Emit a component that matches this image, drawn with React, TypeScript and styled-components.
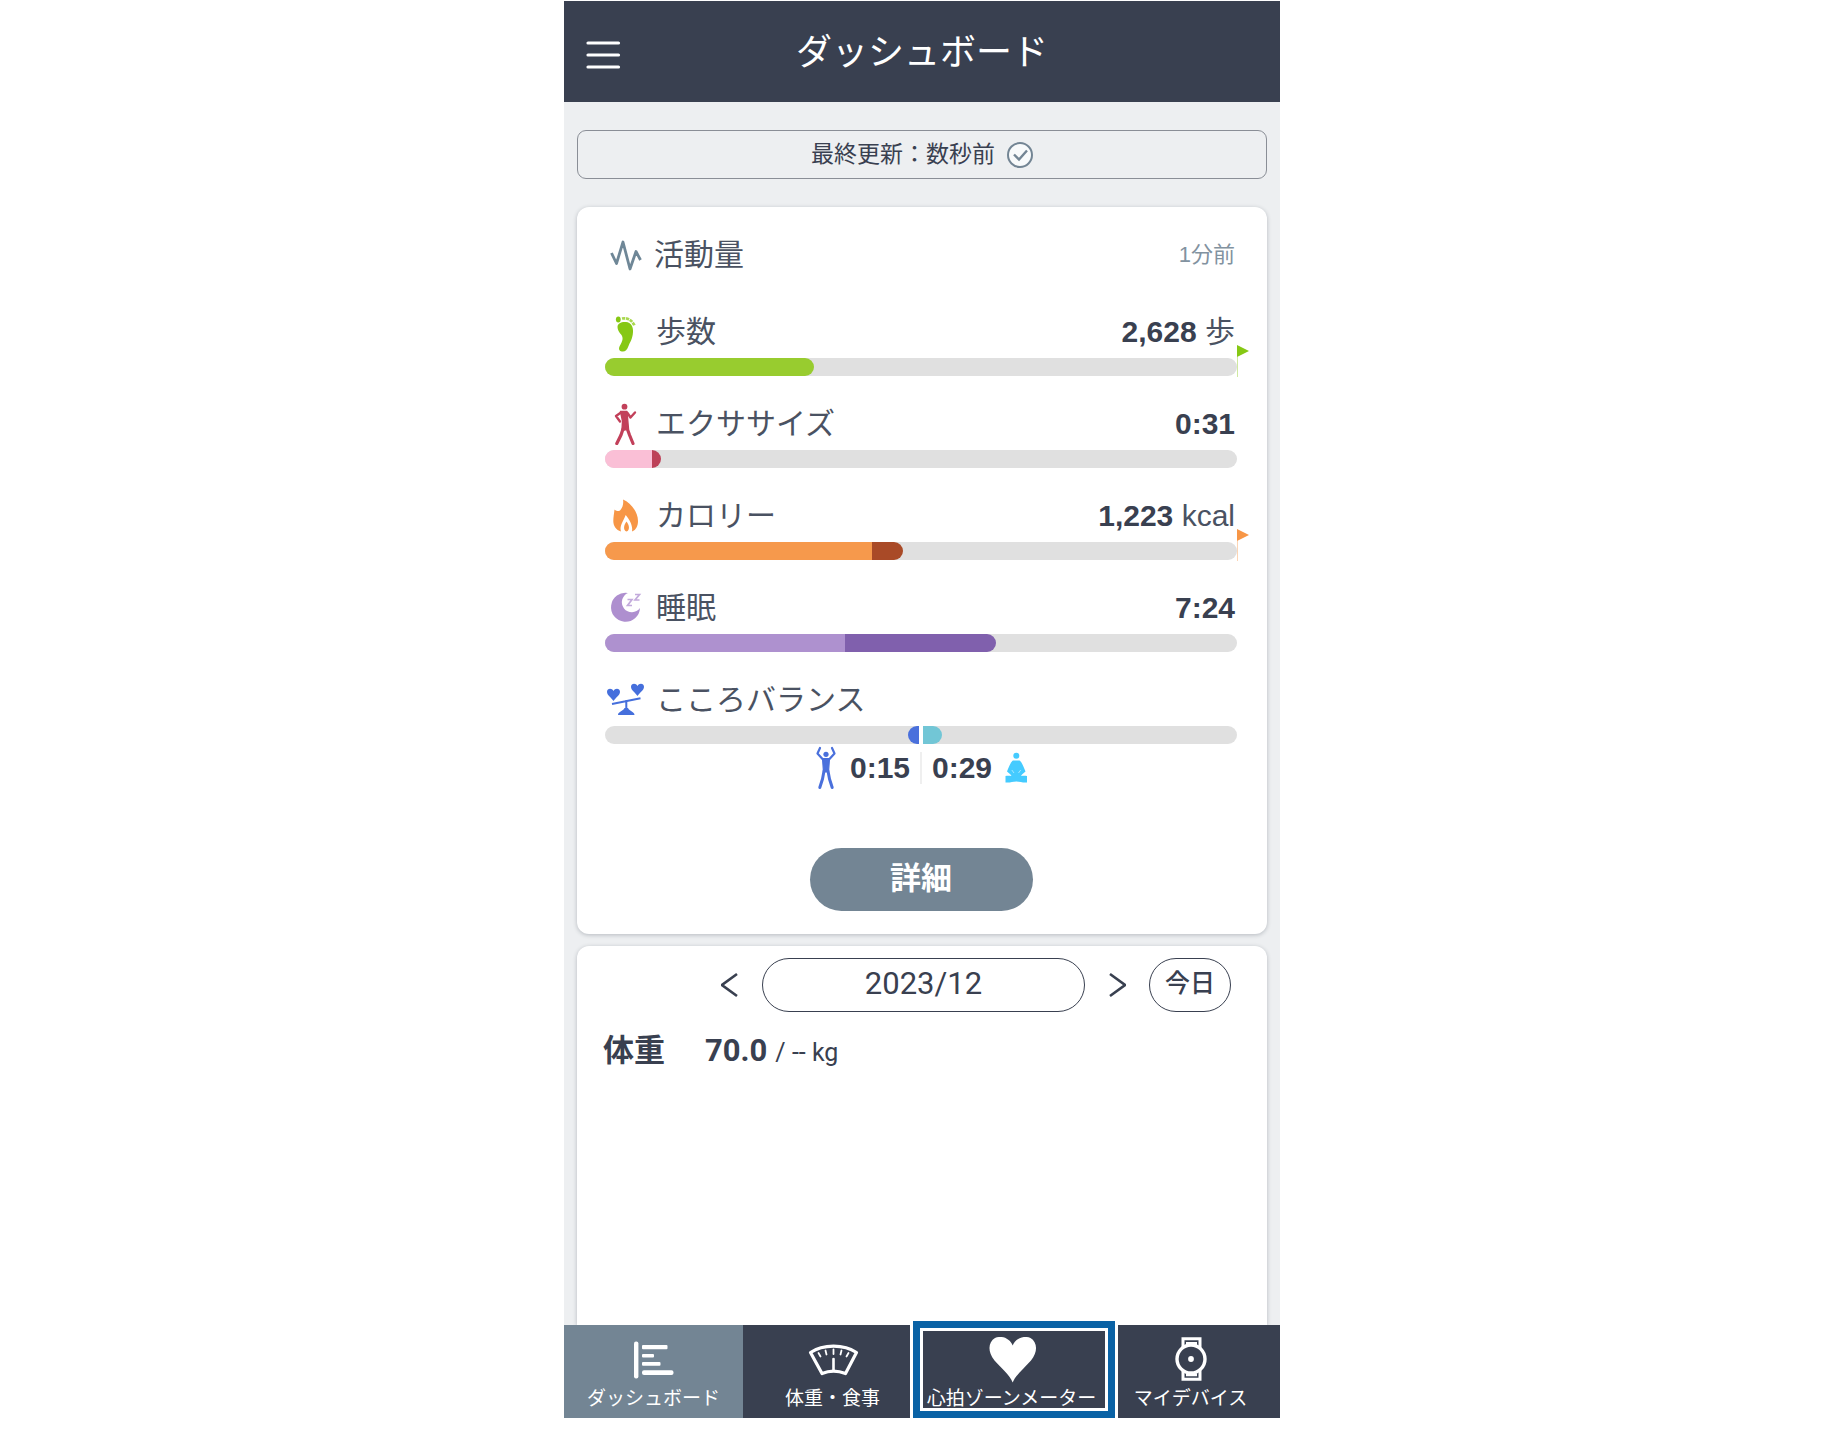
import React from "react";
import styled, { createGlobalStyle } from "styled-components";

const ink = "#394050";
const slate = "#738594";
const sans = `"Liberation Sans", "Noto Sans CJK JP", sans-serif`;
const roboto = `Roboto, "Noto Sans CJK JP", sans-serif`;

const GlobalStyle = createGlobalStyle`
  *, *::before, *::after { box-sizing: border-box; }
  body { margin: 0; background: #fff; font-family: ${roboto}; color: ${ink}; }
  button { font: inherit; color: inherit; background: none; border: 0; padding: 0; cursor: pointer; }
  h1, h2, h3, p { margin: 0; font-weight: 400; }
  svg { display: block; flex: none; }
`;

const Page = styled.div`
  display: flex;
  justify-content: center;
  min-height: 100vh;
  padding: 1px 0 27px 10px;
`;

const Phone = styled.div`
  display: flex;
  flex-direction: column;
  width: 100%;
  max-width: 716px;
  background: #edeff1;
`;

const Header = styled.header`
  display: grid;
  grid-template-columns: 1fr auto 1fr;
  align-items: center;
  height: 101px;
  padding: 2px 20px 0;
  background: ${ink};
  color: #fff;
`;

const MenuButton = styled.button`
  justify-self: start;
  padding-top: 4px;
`;

const Title = styled.h1`
  font-size: 36px;
  line-height: 52px;
`;

const Main = styled.main`
  flex: 1;
  display: flex;
  flex-direction: column;
  padding: 28px 13px 0;
`;

const UpdateButton = styled.button`
  display: flex;
  align-items: center;
  justify-content: center;
  gap: 12px;
  height: 49px;
  margin-bottom: 28px;
  border: 1px solid #8a8e96;
  border-radius: 9px;
  font-size: 23px;
  line-height: 34px;
`;

const Card = styled.section`
  background: #fff;
  border-radius: 12px;
  box-shadow: 0 1px 4px rgba(40, 50, 65, 0.28);
`;

const ActivityCard = styled(Card)`
  display: flex;
  flex-direction: column;
  padding: 28px 30px 23px 28px;
  margin-bottom: 12px;
  font-family: ${sans};
`;

const WeightCard = styled(Card)`
  flex: 1;
  padding: 12px 36px 0 26px;
  border-radius: 12px 12px 0 0;
`;

const Line = styled.div`
  display: flex;
  align-items: center;
  gap: 11px;
  height: 40px;
  padding-right: 2px;
  font-size: 30px;
  line-height: 40px;
  color: #4a5262;
`;

const Heading = styled(Line)`
  gap: 9px;
  margin-bottom: 37px;
`;

const HeadingText = styled.h2`
  flex: 1;
  font-size: 30px;
`;

const Ago = styled.span`
  font-size: 22px;
  color: #8292a0;
`;

const Metrics = styled.div`
  display: grid;
  gap: 28px;
`;

const Metric = styled.div`
  display: grid;
  gap: 6px;
`;

const MetricName = styled.h3`
  flex: 1;
  font-size: 30px;
`;

const MetricValue = styled.b`
  color: ${ink};
`;

const Bar = styled.div`
  position: relative;
  height: 18px;
  border-radius: 9px;
  background: #e0e0e0;
`;

const Fill = styled.div`
  display: flex;
  height: 100%;
`;

const Segment = styled.div<{ $color: string; $first: boolean; $last: boolean }>`
  background: ${(p) => p.$color};
  border-radius: ${(p) => `${p.$first ? 9 : 0}px ${p.$last ? 9 : 0}px ${p.$last ? 9 : 0}px ${p.$first ? 9 : 0}px`};
`;

const Goal = styled.svg`
  position: absolute;
  left: 100%;
  bottom: -1px;
`;

const BalanceBar = styled(Bar)`
  display: grid;
  grid-template-columns: 1fr 1fr;
  column-gap: 4px;
  background: linear-gradient(to right, #e0e0e0 calc(50% - 2px), #fff calc(50% - 2px), #fff calc(50% + 2px), #e0e0e0 calc(50% + 2px));
`;

const BalanceFill = styled.div<{ $side: "left" | "right" }>`
  justify-self: ${(p) => (p.$side === "left" ? "end" : "start")};
  background: ${(p) => (p.$side === "left" ? "#4a70dc" : "#72c6d6")};
  border-radius: ${(p) => (p.$side === "left" ? "9px 0 0 9px" : "0 9px 9px 0")};
`;

const BalanceValues = styled.div`
  display: flex;
  align-items: center;
  justify-content: center;
  gap: 12px;
  height: 44px;
  margin: 2px 0 58px;
  font-size: 30px;
  font-weight: 700;
`;

const Divided = styled.div`
  display: flex;
  align-items: center;
  gap: 10px;
`;

const Divider = styled.span`
  width: 2px;
  height: 32px;
  background: #efefef;
`;

const DetailButton = styled.button`
  align-self: center;
  width: 223px;
  height: 63px;
  padding-bottom: 2px;
  border-radius: 32px;
  background: ${slate};
  color: #fff;
  font-size: 31px;
  font-weight: 700;
  line-height: 40px;
`;

const MonthRow = styled.div`
  display: flex;
  align-items: center;
  justify-content: flex-end;
  gap: 23px;
`;

const Outlined = styled.button<{ $width: number; $size: number; $weight: number }>`
  width: ${(p) => p.$width}px;
  height: 54px;
  border: 1px solid ${ink};
  border-radius: 27px;
  font-size: ${(p) => p.$size}px;
  font-weight: ${(p) => p.$weight};
  line-height: 36px;
  padding-bottom: 2px;
`;

const WeightRow = styled.p`
  display: flex;
  align-items: baseline;
  margin-top: 19px;
  font-size: 25px;
  line-height: 40px;
`;

const WeightName = styled.strong`
  width: 102px;
  font-size: 31px;
`;

const WeightValue = styled.strong`
  margin-right: 8px;
  font-size: 31px;
`;

const Nav = styled.nav`
  display: grid;
  grid-template-columns: repeat(4, 1fr);
  height: 93px;
  background: ${ink};
`;

const Tab = styled.a<{ $active?: boolean }>`
  position: relative;
  display: flex;
  flex-direction: column;
  align-items: center;
  gap: 3px;
  padding-top: 12px;
  background: ${(p) => (p.$active ? slate : "transparent")};
  color: #fff;
  font-size: 19px;
  line-height: 26px;
  white-space: nowrap;
  text-decoration: none;
`;

const Highlight = styled.span`
  position: absolute;
  z-index: 1;
  inset: -4px -14px 0 -9px;
  border: 7px solid #0a62a5;
  box-shadow: inset 0 0 0 3px #fff, -3px 0 0 #fff, 3px 0 0 #fff;
`;

const FootIcon = () => (
  <svg width="40" height="42" viewBox="0 0 40 42" fill="#86c814">
    <path d="M12.500 16C12.500 12 17 10.500 21 11C26 11.500 28.500 16 28 21C27.600 28 25 31 23.500 35C22 39 20 41 17 40.500C13.500 40 13.500 37 15 34.500C17.500 30 18.500 27.500 16.500 24C14 21 12.500 19 12.500 16Z" />
    <ellipse cx="13.300" cy="8.500" rx="2.400" ry="3" />
    <path d="M17 7.500C22 6.500 27 9 29.500 14.500" fill="none" stroke="#a9d850" strokeWidth="2.800" strokeDasharray="3.200 .8" />
  </svg>
);

const WalkIcon = () => (
  <svg width="40" height="42" viewBox="0 0 40 42" fill="none" stroke="#c2405a" strokeWidth="2.400" strokeLinecap="round" strokeLinejoin="round">
    <circle cx="19.500" cy="3.700" r="2.900" fill="#c2405a" stroke="none" />
    <path d="M16 9.500L11 13L15 18.500M22.500 10L25.500 14.500L30 9.500" />
    <path d="M15.500 8.500H22L23.500 26L17 27.500L17.500 18Z" fill="#c2405a" strokeWidth="1.400" />
    <path d="M18 26L16 32L11.800 40.500M22 25L24.500 32L28 40.500" strokeWidth="3.200" />
  </svg>
);

const FlameIcon = () => (
  <svg width="40" height="42" viewBox="0 0 40 42" fill="#f79646">
    <path d="M18 4.500C26 8 33 17 33 26C33 31 31 35 27 36.500C28 31 25 25 20.700 20C19 25 14 31 16 36.500C11 35 8.300 31 8.300 26C8.300 22 9 19 9.500 14.500C11 16 13 16.500 15 15.500C17.500 13 18.800 9 18 4.500Z" />
    <path d="M21.500 26.500C24.500 30 25 35.500 21.500 36.500C18 35.500 18.500 30 21.500 26.500Z" />
  </svg>
);

const MoonIcon = () => (
  <svg width="40" height="42" viewBox="0 0 40 42">
    <path d="M23 6A14.500 14.500 0 1 0 35 21A10 10 0 1 1 23 6Z" fill="#ae8fcf" />
    <path d="M22.500 12.500H27L22.500 18.500H27M30 7.500H34.500L30 13H34.500" fill="none" stroke="#c3abdc" strokeWidth="1.700" />
  </svg>
);

const BalanceIcon = () => (
  <svg width="40" height="42" viewBox="0 0 40 42" fill="#456fdc">
    <path d="M8.500 22C6 18 2 16.500 2 12.700C2 9 7 8.500 8.500 12C10 8.500 15 9 15 12.700C15 16.500 11 18 8.500 22Z" />
    <path d="M32.500 17C30 13 26 11.500 26 7.700C26 4 31 3.500 32.500 7C34 3.500 39 4 39 7.700C39 11.500 35 13 32.500 17Z" />
    <path d="M7 25L35.500 19.300M21.300 21V32" stroke="#456fdc" strokeWidth="2" />
    <path d="M13 36C13 32.500 18 32.500 19.500 29H23C24.500 32.500 29.500 32.500 29.500 36Z" />
  </svg>
);

const StretchIcon = () => (
  <svg width="24" height="44" viewBox="0 0 24 44" fill="none" stroke="#4a70dc" strokeWidth="2.200" strokeLinecap="round" strokeLinejoin="round">
    <circle cx="12" cy="8.300" r="2.600" fill="#4a70dc" stroke="none" />
    <path d="M6 2L3.500 7.500L8.500 13M18 2L20.500 7.500L15.500 13" />
    <path d="M8.500 12.500H15.500L14.500 26H9.500Z" fill="#4a70dc" strokeWidth="1.200" />
    <path d="M10 25L8.500 33L5.800 41.500M14 25L15.500 33L18.200 41.500" strokeWidth="3" />
  </svg>
);

const LotusIcon = () => (
  <svg width="24" height="44" viewBox="0 0 24 44" fill="#45cbff">
    <circle cx="12.300" cy="9.700" r="3" />
    <path d="M9 14.500H15.500C18 16 19.500 21 21.500 25.500L18 28.500L17 30C19.500 29.500 21 29.500 23 30V36.500C19 37 16 35.500 12.300 35.500C8.500 35.500 6 37 1.500 36.500V30C3.500 29.500 5 29.500 7.500 30L6.500 28.500L3 25.500C5 21 6.500 16 9 14.500Z" />
    <path d="M7.800 24L10 27M16.700 24L14.500 27" stroke="#a5e6ff" strokeWidth="1" />
  </svg>
);

const Chevron = ({ d }: { d: string }) => (
  <svg width="18" height="28" viewBox="0 0 18 28" fill="none" stroke={ink} strokeWidth="2.600">
    <path d={d} />
  </svg>
);

type MetricData = {
  name: string;
  icon: React.ReactNode;
  value: string;
  unit?: string;
  goal?: string;
  parts: { share: number; color: string }[];
};

const metrics: MetricData[] = [
  { name: "歩数", icon: <FootIcon />, value: "2,628", unit: "歩", goal: "#86c814", parts: [{ share: 33, color: "#98cc2f" }] },
  { name: "エクササイズ", icon: <WalkIcon />, value: "0:31", parts: [{ share: 7.4, color: "#fabfd6" }, { share: 1.4, color: "#bd4058" }] },
  { name: "カロリー", icon: <FlameIcon />, value: "1,223", unit: "kcal", goal: "#f79646", parts: [{ share: 42.2, color: "#f6994c" }, { share: 4.9, color: "#a94a27" }] },
  { name: "睡眠", icon: <MoonIcon />, value: "7:24", parts: [{ share: 38, color: "#ae91cf" }, { share: 23.8, color: "#8060ad" }] },
];

export default function App() {
  return (
    <>
      <GlobalStyle />
      <Page>
        <Phone>
          <Header>
            <MenuButton aria-label="メニュー">
              <svg width="38" height="32" viewBox="0 0 38 32" stroke="#fff" strokeWidth="3.200" strokeLinecap="round">
                <path d="M4 4H34.500M4 16H34.500M4 28H34.500" />
              </svg>
            </MenuButton>
            <Title>ダッシュボード</Title>
          </Header>
          <Main>
            <UpdateButton>
              最終更新：数秒前
              <svg width="26" height="28" viewBox="0 0 26 28" fill="none" stroke={slate} strokeWidth="2">
                <circle cx="13" cy="14" r="12" fill="#f8fafb" />
                <path d="M7 13.500L12 18.500L20 9.500" strokeWidth="2.400" />
              </svg>
            </UpdateButton>

            <ActivityCard>
              <Heading>
                <svg width="40" height="42" viewBox="0 0 40 42" fill="none" stroke="#6f8797" strokeWidth="2.800" strokeLinejoin="round">
                  <path d="M6.500 19L11.500 29.500L18 8L25 35L31 17.500L35.500 26" />
                </svg>
                <HeadingText>活動量</HeadingText>
                <Ago>1分前</Ago>
              </Heading>
              <Metrics>
                {metrics.map((m) => (
                  <Metric key={m.name}>
                    <Line>
                      {m.icon}
                      <MetricName>{m.name}</MetricName>
                      <span>
                        <MetricValue>{m.value}</MetricValue>
                        {m.unit && ` ${m.unit}`}
                      </span>
                    </Line>
                    <Bar>
                      <Fill>
                        {m.parts.map((p, i) => (
                          <Segment
                            key={p.color}
                            $color={p.color}
                            $first={i === 0}
                            $last={i === m.parts.length - 1}
                            style={{ width: `${p.share}%` }}
                          />
                        ))}
                      </Fill>
                      {m.goal && (
                        <Goal width="12" height="32" viewBox="0 0 12 32" fill={m.goal}>
                          <path d="M0 0L12 6L0 12Z" />
                          <path d="M0 12H1V32H0Z" opacity=".4" />
                        </Goal>
                      )}
                    </Bar>
                  </Metric>
                ))}
                <Metric>
                  <Line>
                    <BalanceIcon />
                    <MetricName>こころバランス</MetricName>
                  </Line>
                  <BalanceBar>
                    <BalanceFill $side="left" style={{ width: "3.4%" }} />
                    <BalanceFill $side="right" style={{ width: "5.9%" }} />
                  </BalanceBar>
                </Metric>
              </Metrics>
              <BalanceValues>
                <StretchIcon />
                <Divided>
                  <span>0:15</span>
                  <Divider />
                  <span>0:29</span>
                </Divided>
                <LotusIcon />
              </BalanceValues>
              <DetailButton>詳細</DetailButton>
            </ActivityCard>

            <WeightCard>
              <MonthRow>
                <button aria-label="前の月">
                  <Chevron d="M16 3L1 14L16 25" />
                </button>
                <Outlined $width={323} $size={31} $weight={400}>2023/12</Outlined>
                <button aria-label="次の月">
                  <Chevron d="M2 3L17 14L2 25" />
                </button>
                <Outlined $width={82} $size={25} $weight={500}>今日</Outlined>
              </MonthRow>
              <WeightRow>
                <WeightName>体重</WeightName>
                <WeightValue>70.0</WeightValue>
                <span>/ -- kg</span>
              </WeightRow>
            </WeightCard>
          </Main>
          <Nav>
            <Tab href="#dashboard" $active>
              <svg width="52" height="46" viewBox="0 0 52 46" fill="#fff">
                <rect x="6" y="4.500" width="4.400" height="37" rx="2" />
                <rect x="14" y="8" width="25.500" height="4.200" rx="1" />
                <rect x="14" y="17" width="12" height="3.600" rx="1" />
                <rect x="14" y="25" width="18.500" height="3.800" rx="1" />
                <rect x="14" y="33.300" width="31.500" height="4.600" rx="2" />
              </svg>
              ダッシュボード
            </Tab>
            <Tab href="#weight">
              <svg width="52" height="46" viewBox="0 0 52 46" fill="none" stroke="#fff" strokeWidth="3.200" strokeLinejoin="round" strokeLinecap="round">
                <path d="M3.500 15.500C16 7 37 7 49.500 15.500L38.500 36.500C31 33.500 22 33.500 15 36.500Z" />
                <path d="M26.500 22V33" strokeWidth="2.600" />
                <path d="M26.500 12.500V17M18.500 13.500L19.500 17.500M34.500 13.500L33.500 17.500M11.500 16L13.500 19.500M41.500 16L39.500 19.500" strokeWidth="1.800" />
              </svg>
              体重・食事
            </Tab>
            <Tab href="#heart-zone">
              <svg width="52" height="46" viewBox="0 0 52 46" fill="#fff">
                <path d="M26.700 45.500C24 38 15 31 8.500 23.500C1 14 2.500 5 9 1C16-2 24 1.500 26.700 8.500C29.500 1.500 37.500-2 44.500 1C51 5 52.500 14 45 23.500C38.500 31 29.500 38 26.700 45.500Z" />
              </svg>
              心拍ゾーンメーター
              <Highlight />
            </Tab>
            <Tab href="#devices">
              <svg width="52" height="46" viewBox="0 0 52 46" fill="none" stroke="#fff" strokeWidth="3">
                <circle cx="26" cy="22" r="14" strokeWidth="3.400" />
                <circle cx="26" cy="22" r="2.900" fill="#fff" stroke="none" />
                <path d="M18 11V1.800H35V11M18 33V42.300H35V33M21 6.500H32M21 37.800H32" />
              </svg>
              マイデバイス
            </Tab>
          </Nav>
        </Phone>
      </Page>
    </>
  );
}
